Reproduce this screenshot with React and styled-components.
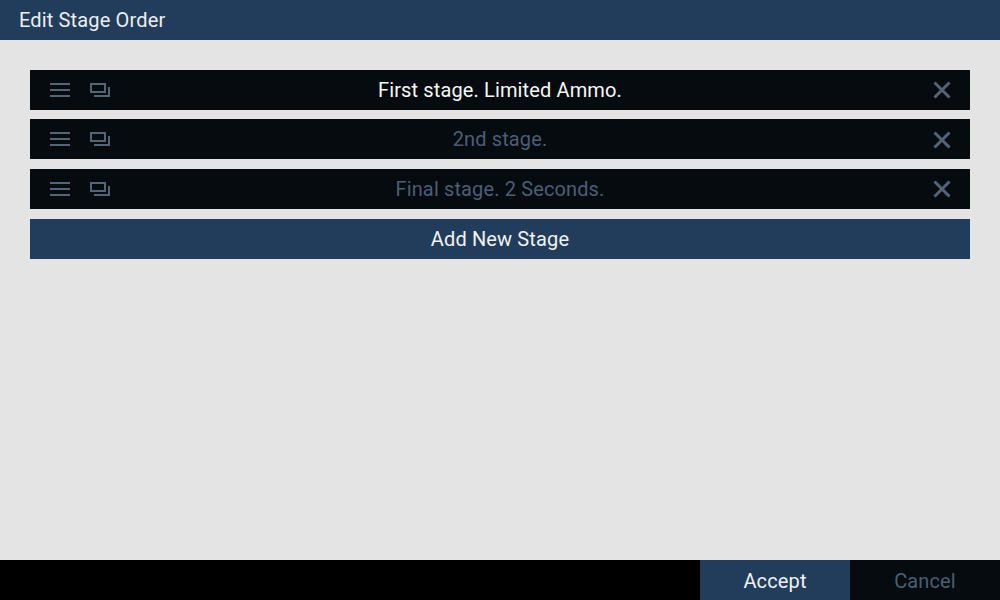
import React from "react";
import styled, { createGlobalStyle } from "styled-components";

const Global = createGlobalStyle`
  html, body { margin: 0; padding: 0; width: 1000px; height: 600px; overflow: hidden; background: #e4e4e4; }
  * { box-sizing: border-box; }
`;
const Page = styled.div`
  width: 1000px; height: 600px; display: flex; flex-direction: column;
  font-family: Roboto, "Liberation Sans", sans-serif; font-size: 20px; letter-spacing: 0.13px; background: #e4e4e4;
`;
const Header = styled.header`
  height: 40px; flex: none; background: #213d5b; color: #eeeeee; padding: 0 0 1px 19px;
  display: flex; align-items: center; font-size: 20px; letter-spacing: 0.15px;
`;
const Content = styled.main`
  flex: 1; display: flex; flex-direction: column; gap: 9.6px; padding: 29.8px 30px 0;
`;
const Row = styled.div`
  height: 40px; flex: none; background: #050b0f; display: grid;
  grid-template-columns: 100px 1fr 100px; align-items: center;
`;
const Handles = styled.div`
  display: flex; align-items: center; gap: 20px; padding-left: 20px; color: #536477;
`;
const Title = styled.div`
  text-align: center; color: ${p => (p.$active ? "#f8f8f8" : "#4b5e76")};
`;
const Remove = styled.div`
  display: flex; justify-content: flex-end; padding: 1px 18px 0 0; color: #536477;
`;
const AddButton = styled.div`
  height: 40px; flex: none; background: #213d5b; color: #f2f2f2; display: flex;
  align-items: center; justify-content: center;
`;
const Footer = styled.footer`
  height: 40px; flex: none; background: #000; display: flex; justify-content: flex-end;
`;
const FooterButton = styled.div`
  width: 150px; padding-top: 1px; display: flex; align-items: center; justify-content: center;
  background: ${p => (p.$primary ? "#213d5b" : "#050b0f")};
  color: ${p => (p.$primary ? "#f2f2f2" : "#4b5e76")};
`;

const Menu = () => (
  <svg width="20" height="14" viewBox="0 0 20 14" fill="currentColor" shapeRendering="crispEdges">
    <rect x="0" y="0" width="20" height="2" />
    <rect x="0" y="6" width="20" height="2" />
    <rect x="0" y="12" width="20" height="2" />
  </svg>
);
const Copy = () => (
  <svg width="20" height="14" viewBox="0 0 20 14" fill="none" stroke="currentColor" strokeWidth="2" shapeRendering="crispEdges">
    <rect x="1" y="1" width="14" height="8" />
    <path d="M19 4v9H4" />
  </svg>
);
const Close = () => (
  <svg width="20" height="20" viewBox="0 0 20 20" stroke="currentColor" strokeWidth="3">
    <path d="M2.5 2.5l15 15M17.5 2.5l-15 15" />
  </svg>
);

const stages = ["First stage. Limited Ammo.", "2nd stage.", "Final stage. 2 Seconds."];

export default function App() {
  return (
    <Page>
      <Global />
      <Header>Edit Stage Order</Header>
      <Content>
        {stages.map((s, i) => (
          <Row key={s}>
            <Handles><Menu /><Copy /></Handles>
            <Title $active={i === 0}>{s}</Title>
            <Remove><Close /></Remove>
          </Row>
        ))}
        <AddButton>Add New Stage</AddButton>
      </Content>
      <Footer>
        <FooterButton $primary>Accept</FooterButton>
        <FooterButton>Cancel</FooterButton>
      </Footer>
    </Page>
  );
}
